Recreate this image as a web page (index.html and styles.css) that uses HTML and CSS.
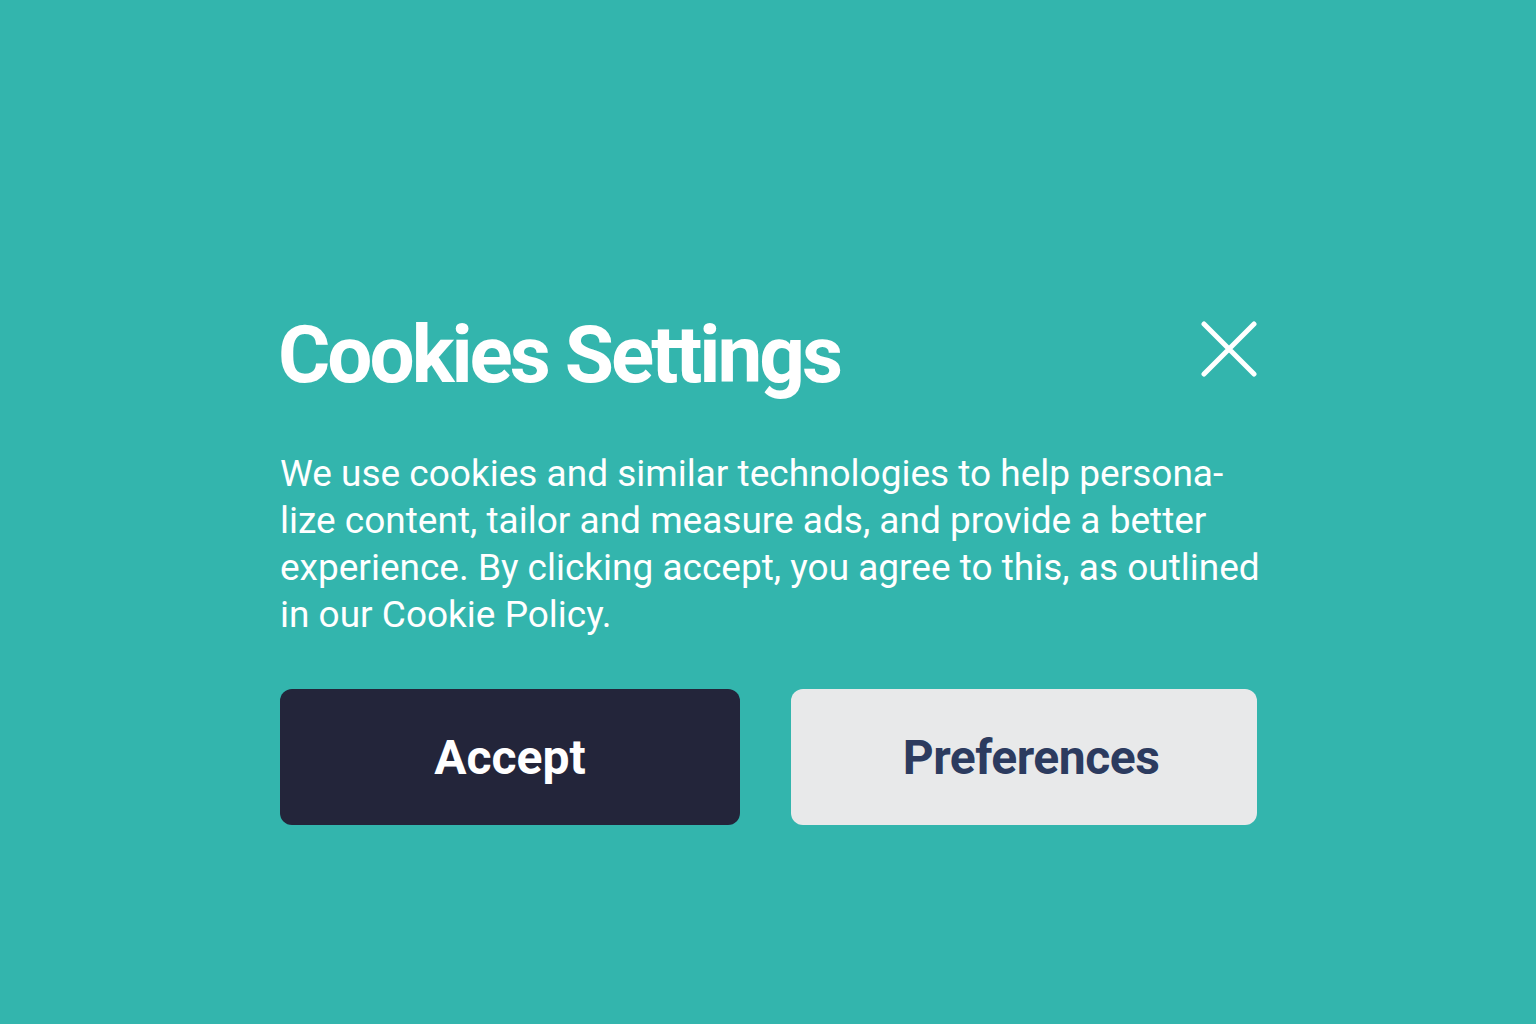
FILE: index.html
```html
<!DOCTYPE html>
<html lang="en">
<head>
    <meta charset="UTF-8">
    <meta name="viewport" content="width=device-width, initial-scale=1.0">
    <title>Cookies Settings</title>
    <link rel="stylesheet" href="styles.css">
</head>
<body>
    <div class="cookie-panel">
        <div class="panel-header">
            <h1>Cookies Settings</h1>
            <button class="close-btn" aria-label="Close">
                <svg width="56" height="56" viewBox="0 0 56 56">
                    <path d="M3 3 L53 53 M53 3 L3 53" stroke="#fff" stroke-width="5" stroke-linecap="round" fill="none"/>
                </svg>
            </button>
        </div>
        <p class="cookie-text">We use cookies and similar technologies to help persona-<br>lize content, tailor and measure ads, and provide a better<br>experience. By clicking accept, you agree to this, as outlined<br>in our Cookie Policy.</p>
        <div class="actions">
            <button class="accept-btn">Accept</button>
            <button class="prefs-btn">Preferences</button>
        </div>
    </div>
</body>
</html>
```

FILE: styles.css
```css
body { margin: 0; background-color: #33b5ad; font-family: Roboto, "Liberation Sans", sans-serif; color: #fff; }
.cookie-panel { width: 977px; margin-left: 280px; padding-top: 315px; }
.panel-header { display: flex; justify-content: space-between; align-items: flex-start; }
.panel-header h1 { margin: 0 0 0 -2px; font-size: 80px; line-height: 1; font-weight: 700; letter-spacing: -3px; }
.close-btn { background: none; border: none; padding: 0; margin-top: 6px; cursor: pointer; }
.close-btn svg { display: block; }
.cookie-text { margin: 55px 0 0 0; font-size: 37px; line-height: 47px; font-weight: 400; white-space: nowrap; }
.actions { display: flex; justify-content: space-between; margin-top: 51px; }
.actions button {
    height: 136px;
    border: none;
    border-radius: 12px;
    font-family: Roboto, "Liberation Sans", sans-serif;
    font-size: 48px;
    font-weight: 700;
    cursor: pointer;
}
.accept-btn { width: 460px; background-color: #23253a; color: #fff; }
.prefs-btn { width: 466px; padding-left: 20px; background-color: #e8e9ea; color: #2c3b5f; letter-spacing: -0.5px; }
```
